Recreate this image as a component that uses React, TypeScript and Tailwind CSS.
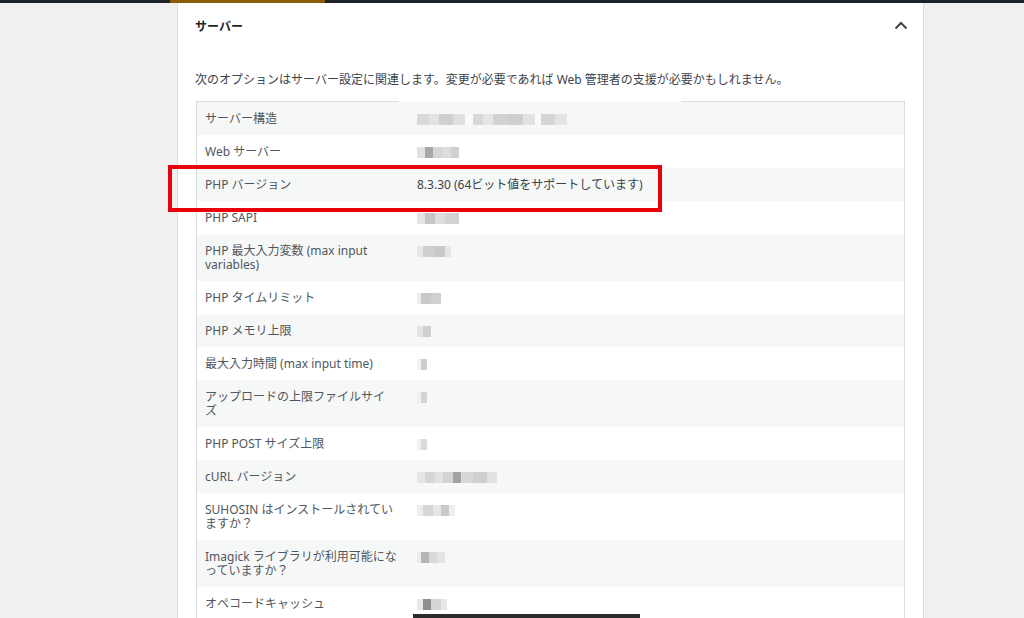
const font = "font-['Noto_Sans','Noto_Sans_CJK_JP',sans-serif]";

type Cell = [number, string];

const rows: { label: string; value?: string; blur?: Cell[] }[] = [
  { label: "サーバー構造", blur: [[12, "#d9d9d9"], [10, "#e3e3e3"], [14, "#d0d0d0"], [12, "#e0e0e0"], [8, "#fafafa"], [10, "#d8d8d8"], [10, "#e6e6e6"], [14, "#d2d2d2"], [16, "#cfcfcf"], [12, "#e2e2e2"], [6, "#fafafa"], [14, "#d6d6d6"], [12, "#e4e4e4"]] },
  { label: "Web サーバー", blur: [[8, "#e2e2e2"], [8, "#a8a8a8"], [10, "#d6d6d6"], [8, "#dddddd"], [8, "#d0d0d0"]] },
  { label: "PHP バージョン", value: "8.3.30 (64ビット値をサポートしています)" },
  { label: "PHP SAPI", blur: [[8, "#e4e4e4"], [10, "#c6c6c6"], [10, "#dedede"], [14, "#d2d2d2"]] },
  { label: "PHP 最大入力変数 (max input\nvariables)", blur: [[6, "#e8e8e8"], [12, "#cfcfcf"], [10, "#c9c9c9"], [6, "#e6e6e6"]] },
  { label: "PHP タイムリミット", blur: [[4, "#ececec"], [10, "#c9c9c9"], [10, "#d0d0d0"]] },
  { label: "PHP メモリ上限", blur: [[6, "#e5e5e5"], [8, "#d0d0d0"]] },
  { label: "最大入力時間 (max input time)", blur: [[4, "#f2f2f2"], [6, "#cdcdcd"]] },
  { label: "アップロードの上限ファイルサイ\nズ", blur: [[4, "#f0f0f0"], [6, "#d3d3d3"]] },
  { label: "PHP POST サイズ上限", blur: [[4, "#f2f2f2"], [6, "#dadada"]] },
  { label: "cURL バージョン", blur: [[8, "#e6e6e6"], [10, "#d6d6d6"], [8, "#e2e2e2"], [10, "#d4d4d4"], [8, "#a3a3a3"], [12, "#d8d8d8"], [14, "#cfcfcf"], [10, "#e2e2e2"]] },
  { label: "SUHOSIN はインストールされてい\nますか？", blur: [[6, "#eeeeee"], [10, "#d6d6d6"], [8, "#e6e6e6"], [8, "#c9c9c9"], [6, "#eeeeee"]] },
  { label: "Imagick ライブラリが利用可能にな\nっていますか？", blur: [[4, "#ececec"], [8, "#b5b5b5"], [8, "#d8d8d8"], [8, "#e4e4e4"]] },
  { label: "オペコードキャッシュ", blur: [[6, "#e8e8e8"], [8, "#8e8e8e"], [10, "#d6d6d6"], [6, "#e8e8e8"]] },
];

function Blur({ cells }: { cells: Cell[] }) {
  return (
    <div className="flex h-[11px] mt-[2px]">
      {cells.map(([w, c], i) => (
        <span key={i} className="h-full" style={{ width: w, background: c }} />
      ))}
    </div>
  );
}

export default function App() {
  return (
    <div className={`relative h-[618px] w-full overflow-hidden bg-[#f0f0f1] ${font}`}>
      {/* admin bar strip */}
      <div className="flex h-[3px] bg-[#1d2327]">
        <div className="ml-[170px] w-[155px] bg-[#8a5a05]" />
      </div>

      <div className="ml-[177px] h-full w-[747px] border-x border-[#dcdcde] bg-white">
        <div className="flex h-[44px] items-center justify-between pl-[17px] pr-[15px]">
          <h2 className="pt-[4px] text-[12px] font-bold text-[#1d2327]">サーバー</h2>
          <svg width="14" height="9" viewBox="0 0 14 9" fill="none">
            <path d="M1.5 7.5L7 2L12.5 7.5" stroke="#3c434a" strokeWidth="2" />
          </svg>
        </div>

        <p className="mt-[25px] pl-[17px] text-[12px] leading-[16px] text-[#3c434a]">
          次のオプションはサーバー設定に関連します。変更が必要であれば Web 管理者の支援が必要かもしれません。
        </p>

        <div className="relative mx-[18px] mt-[13px] border border-[#dcdcde]">
          <div className="absolute -top-px left-[202px] h-px w-[282px] bg-white" />
          {rows.map((r, i) => (
            <div
              key={i}
              className={`flex text-[12px] leading-[14px] ${i % 2 === 0 ? "bg-[#f6f7f7]" : "bg-white"}`}
            >
              <div className="w-[210px] shrink-0 whitespace-pre-line pb-[9px] pl-[8px] pr-[4px] pt-[10px] text-[#50575e]">{r.label}</div>
              <div className="flex-1 pb-[9px] pl-[10px] pr-[10px] pt-[10px] text-[#3c434a]">
                {r.value ? r.value : <Blur cells={r.blur ?? []} />}
              </div>
            </div>
          ))}
        </div>
      </div>

      {/* annotation */}
      <div className="absolute left-[168px] top-[165px] h-[47px] w-[494px] border-[4px] border-[#e8000b]" />
      <div className="absolute left-[413px] top-[614px] h-[4px] w-[227px] bg-[#2c2c2c]" />
    </div>
  );
}
